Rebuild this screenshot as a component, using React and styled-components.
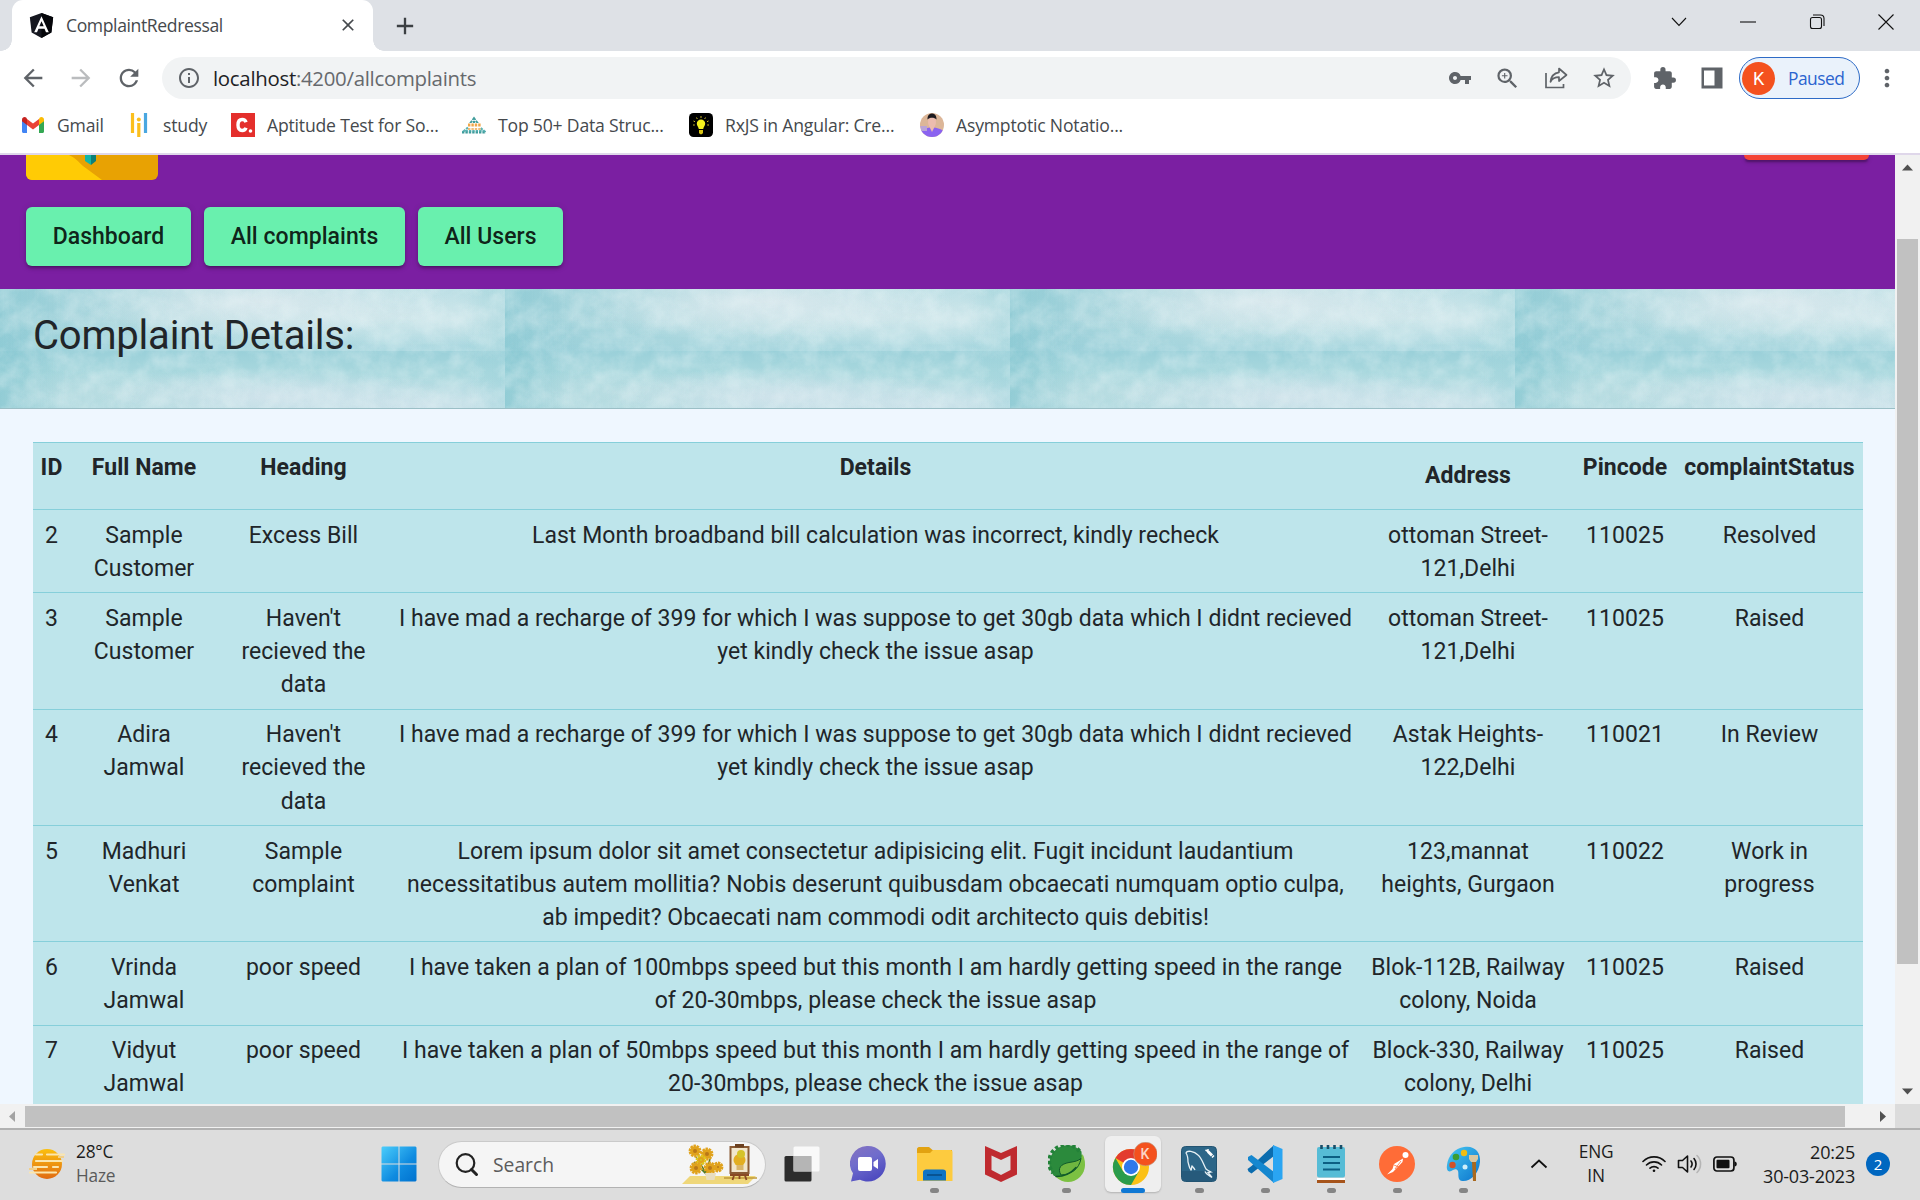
import React from 'react';
import styled, { createGlobalStyle, css } from 'styled-components';
import {
  MdArrowBack, MdArrowForward, MdRefresh, MdInfoOutline, MdVpnKey, MdZoomIn,
  MdStarBorder, MdExtension, MdMoreVert, MdClose, MdAdd,
} from 'react-icons/md';

const GlobalStyle = createGlobalStyle`
  * { box-sizing: border-box; }
  html, body { margin: 0; padding: 0; overflow: hidden; }
  svg { display: block; flex: none; }
`;

const uiFont = '"Open Sans", "Noto Sans", sans-serif';
const pageFont = 'Roboto, "Liberation Sans", sans-serif';

const Screen = styled.div`
  width: 1920px;
  height: 1200px;
  display: flex;
  flex-direction: column;
  overflow: hidden;
  background: #fff;
  font-family: ${uiFont};
`;

/* ---------- browser frame ---------- */
const TabStrip = styled.div`
  height: 51px;
  flex: none;
  display: flex;
  align-items: stretch;
  justify-content: space-between;
  background: #dee1e6;
`;
const Tabs = styled.div`
  display: flex;
  padding-left: 12px;
`;
const Tab = styled.div`
  position: relative;
  width: 361px;
  display: flex;
  align-items: center;
  padding: 0 15px 1px 17px;
  background: #fff;
  border-radius: 11px 11px 0 0;
  color: #45494d;
  font-size: 17.6px;
  letter-spacing: -0.4px;
  &::before, &::after {
    content: '';
    position: absolute;
    bottom: 0;
    width: 11px;
    height: 11px;
  }
  &::before { left: -11px; background: radial-gradient(circle at 0 0, transparent 10.5px, #fff 11px); }
  &::after { right: -11px; background: radial-gradient(circle at 100% 0, transparent 10.5px, #fff 11px); }
`;
const TabTitle = styled.span`
  flex: 1;
  margin-left: 12px;
`;
const NewTab = styled.div`
  display: flex;
  align-items: center;
  margin-left: 18px;
  color: #3c4043;
`;
const WindowControls = styled.div`
  display: flex;
  align-items: center;
  padding: 0 26px 8px 0;
  gap: 53px;
`;

const AddressBar = styled.div`
  height: 54px;
  flex: none;
  display: flex;
  align-items: center;
  padding: 0 18px 0 19px;
`;
const NavIcons = styled.div`
  display: flex;
  gap: 20px;
  width: 143px;
  color: #5f6368;
  svg:nth-child(2) { color: #babcbe; }
`;
const Omnibox = styled.div`
  width: 1469px;
  height: 42px;
  display: flex;
  align-items: center;
  padding: 0 14px 0 15px;
  border-radius: 21px;
  background: #f1f3f4;
  color: #5f6368;
`;
const Url = styled.span`
  flex: 1;
  margin-left: 12px;
  font-size: 20.4px;
  letter-spacing: -0.28px;
  color: #66696d;
  b { font-weight: 400; color: #202124; }
`;
const OmniActions = styled.div`
  display: flex;
  align-items: center;
  gap: 22px;
`;
const Extensions = styled.div`
  display: flex;
  align-items: center;
  gap: 24px;
  margin-left: 21px;
  color: #5f6368;
`;
const ProfileChip = styled.div`
  width: 121px;
  height: 42px;
  margin-left: 16px;
  display: flex;
  align-items: center;
  padding-left: 2px;
  border: 1.5px solid #2e6bc6;
  border-radius: 21px;
  background: #eaf2fb;
  color: #2b64cf;
  font-size: 17.4px;
  letter-spacing: -0.5px;
`;
const Avatar = styled.span`
  width: 33px;
  height: 33px;
  margin-right: 13px;
  border-radius: 50%;
  display: flex;
  align-items: center;
  justify-content: center;
  background: #f4511e;
  color: #fff;
  font: 400 18px ${pageFont};
`;
const MenuDots = styled.div`
  margin-left: 13px;
  color: #5f6368;
`;

const Bookmarks = styled.div`
  height: 50px;
  flex: none;
  display: flex;
  padding: 0 0 8px 21px;
  border-bottom: 2px solid #dfd7ea;
`;
const Bookmark = styled.div`
  width: ${p => p.$width}px;
  display: flex;
  align-items: center;
  gap: 12px;
  color: #45494d;
  font-size: 17.6px;
  letter-spacing: -0.19px;
  white-space: nowrap;
`;

/* ---------- page ---------- */
const Viewport = styled.div`
  height: 949px;
  flex: none;
  display: flex;
`;
const Page = styled.div`
  width: 1895px;
  height: 949px;
  overflow: hidden;
  background: #eff7ff;
  font-family: ${pageFont};
  color: #212529;
`;
const AppHeader = styled.header`
  height: 134px;
  background: #7b1fa2;
  padding-left: 26px;
`;
const HeaderTop = styled.div`
  height: 52px;
  display: flex;
  justify-content: space-between;
  align-items: flex-start;
  padding-right: 26px;
`;
const Logo = styled.svg`
  border-radius: 0 0 6px 6px;
`;
const LogoutEdge = styled.div`
  width: 125px;
  height: 5px;
  border-radius: 0 0 5px 5px;
  background: #f44336;
  box-shadow: 0 3px 2px -1px rgba(0,0,0,.25), 0 2px 5px rgba(0,0,0,.2);
`;
const HeaderNav = styled.nav`
  display: flex;
  gap: 13px;
`;
const NavButton = styled.button`
  width: ${p => p.$width}px;
  height: 59px;
  padding: 0;
  border: 0;
  border-radius: 6px;
  background: #69f0ae;
  color: rgba(0,0,0,.87);
  font: 500 23px ${pageFont};
  letter-spacing: .04px;
  box-shadow: 0 4px 2px -3px rgba(0,0,0,.2), 0 3px 3px rgba(0,0,0,.16), 0 1px 7px rgba(0,0,0,.14);
`;

const Banner = styled.section`
  position: relative;
  height: 120px;
  padding: 23px 0 0 33px;
  border-bottom: 1px solid #9bbfc6;
  background-color: #b4dae0;
  background-image:
    linear-gradient(90deg, rgba(135,200,210,.45), transparent 14%, transparent 92%, rgba(170,215,222,.6)),
    radial-gradient(ellipse at 52% 20%, rgba(220,233,238,.85), transparent 50%),
    radial-gradient(ellipse at 80% 45%, rgba(208,231,235,.9), transparent 60%),
    linear-gradient(180deg, transparent 50%, rgba(145,205,216,.4)),
    linear-gradient(90deg, #9acfd8, #b4dbe1 40%, #bcdfe5 90%, #a9d8de),
    linear-gradient(90deg, rgba(125,195,206,.6), transparent 13%, transparent 93%, rgba(160,212,220,.5)),
    radial-gradient(ellipse at 54% 80%, rgba(210,228,236,.9), transparent 45%),
    radial-gradient(ellipse at 84% 95%, rgba(206,227,235,.9), transparent 38%),
    radial-gradient(ellipse at 25% 75%, rgba(186,221,226,.9), transparent 40%),
    linear-gradient(180deg, #9ad0d9, #a9d8de 40%, #b1dae0);
  background-repeat: repeat-x;
  background-size: 505px 62px, 505px 62px, 505px 62px, 505px 62px, 505px 62px,
    505px 57px, 505px 57px, 505px 57px, 505px 57px, 505px 57px;
  background-position: 0 0, 0 0, 0 0, 0 0, 0 0, 0 62px, 0 62px, 0 62px, 0 62px, 0 62px;
`;
const BannerGrain = styled.svg`
  position: absolute;
  left: 0;
  top: 0;
`;
const BannerTitle = styled.h1`
  position: relative;
  margin: 0;
  font-weight: 400;
  font-size: 40px;
  letter-spacing: -.2px;
  line-height: 48px;
`;

const ComplaintTable = styled.table`
  width: 1830px;
  margin: 33px 0 0 33px;
  table-layout: fixed;
  border-collapse: separate;
  border-spacing: 0;
  background: #bee5eb;
  text-align: center;
  font-size: 23px;
  line-height: 33.2px;
  letter-spacing: .04px;
`;
const cell = css`
  padding: 8.7px 0 7.1px;
  border-top: 1px solid #86cfda;
  vertical-align: top;
  white-space: nowrap;
`;
const HeadCell = styled.th`
  ${cell}
  height: 67px;
  padding-top: ${p => (p.$lowered ? 16 : 8)}px;
  font-weight: 700;
`;
const Cell = styled.td`
  ${cell}
`;

/* ---------- scrollbars ---------- */
const VScroll = styled.div`
  width: 25px;
  display: flex;
  flex-direction: column;
  align-items: center;
  padding: 9px 0 9px;
  background: #f1f1f1;
`;
const VThumb = styled.div`
  width: 21px;
  height: 725px;
  margin: 68px 0 auto;
  background: #c1c1c1;
`;
const HScroll = styled.div`
  height: 24px;
  flex: none;
  display: flex;
  align-items: center;
  background: #f1f1f1;
`;
const HThumb = styled.div`
  width: 1820px;
  height: 21px;
  margin: 0 35px 0 10px;
  background: #c1c1c1;
`;
const Corner = styled.div`
  width: 25px;
  height: 24px;
  margin-left: auto;
  background: #dcdcdc;
`;

/* ---------- taskbar ---------- */
const Taskbar = styled.div`
  height: 72px;
  flex: none;
  display: flex;
  align-items: center;
  border-top: 2px solid #b1b1b1;
  padding: 0 30px 2px 0;
  background: #dddddd;
`;
const Weather = styled.div`
  width: 381px;
  display: flex;
  align-items: center;
  gap: 11px;
  padding-left: 28px;
`;
const Stack = styled.div`
  width: ${p => p.$width || 'auto'};
  font-size: ${p => p.$size || 17.3}px;
  line-height: 24px;
  text-align: ${p => p.$align || 'left'};
  color: #1b1b1b;
  letter-spacing: -0.2px;
  span { display: block; }
`;
const Muted = styled.span`
  color: #5a5a5a;
`;
const SearchBox = styled.div`
  width: 328px;
  height: 47px;
  margin: 0 3px 0 21px;
  display: flex;
  align-items: center;
  padding: 0 7px 0 15px;
  border: 1.5px solid #cacaca;
  border-bottom-color: #b2b2b2;
  border-radius: 24px;
  background: #f5f5f5;
  color: #5c5c5c;
  font-size: 19.3px;
  overflow: hidden;
`;
const SearchLabel = styled.span`
  flex: 1;
  margin-left: 14px;
`;
const AppButton = styled.div`
  position: relative;
  width: 56px;
  height: 56px;
  margin: 0 5.08px;
  border-radius: 6px;
  display: flex;
  align-items: center;
  justify-content: center;
  ${p => p.$active && css`
    background: #efefef;
    box-shadow: 0 1px 2px rgba(0,0,0,.2);
  `}
  &::after {
    content: '';
    position: absolute;
    bottom: -1px;
    width: ${p => (p.$active ? 24 : 9)}px;
    height: 5px;
    border-radius: 3px;
    background: ${p => (p.$active ? '#0f78d4' : p.$running ? '#858585' : 'transparent')};
  }
`;
const Tray = styled.div`
  display: flex;
  align-items: center;
  margin-left: auto;
`;
const TrayIcons = styled.div`
  display: flex;
  align-items: center;
  gap: 11px;
  margin: 0 26px 0 -2px;
`;
const Notice = styled.div`
  width: 24px;
  height: 24px;
  margin-left: 11px;
  border-radius: 50%;
  display: flex;
  align-items: center;
  justify-content: center;
  background: #0067c0;
  color: #fff;
  font-size: 15px;
`;

/* ---------- icons ---------- */
const AngularIcon = () => (
  <svg width="25" height="25" viewBox="0 0 24 24">
    <path d="M12 0 .8 4l1.7 14.8L12 24l9.5-5.2L23.2 4z" fill="#15171f" />
    <path d="M12 0v24l9.5-5.2L23.2 4z" fill="#05060a" />
    <path d="M12 3 5 18.5h2.7l1.4-3.5h5.8l1.4 3.5H19zm0 5 2.100 4.800H9.900z" fill="#fff" fillRule="evenodd" />
  </svg>
);
const GmailIcon = () => (
  <svg width="24" height="24" viewBox="0 0 24 24">
    <path d="M1 7v11.500c0 .8.600 1.500 1.500 1.500H6V10z" fill="#4285f4" />
    <path d="M23 7v11.500c0 .8-.6 1.500-1.500 1.500H18V10z" fill="#34a853" />
    <path d="M18 6v6l5-3.700V6.500c0-2.200-2.500-3.300-4.200-2z" fill="#fbbc04" />
    <path d="M6 12V6l6 4.500L18 6v6l-6 4.500z" fill="#ea4335" />
    <path d="M1 6.500v1.800L6 12V6L5.200 4.500C3.500 3.200 1 4.300 1 6.500z" fill="#c5221f" />
  </svg>
);
const StudyIcon = () => (
  <svg width="24" height="26" viewBox="0 0 24 26" fill="none" strokeWidth="3.200">
    <path d="M5.500 1v20M11.800 11v14" stroke="#fbbf1d" />
    <path d="M18.500 1v20" stroke="#4aa7e0" />
    <circle cx="11.800" cy="7.500" r="2" fill="#fbbf1d" />
  </svg>
);
const CIcon = () => (
  <svg width="24" height="24" viewBox="0 0 24 24">
    <path d="M0 0h24v24H0z" fill="#e42f2c" />
    <path d="M15 9.200C14.500 7.500 13 6.500 11.200 6.500 8.500 6.500 7 8.800 7 12s1.500 5.500 4.200 5.500c1.800 0 3.300-1 3.800-2.700" fill="none" stroke="#fff" strokeWidth="3.400" />
    <circle cx="19.500" cy="18" r="1.800" fill="#fff" />
  </svg>
);
const PyramidIcon = () => (
  <svg width="24" height="24" viewBox="0 0 24 24" fill="none" strokeWidth="2.200" strokeDasharray="2.400 1">
    <path d="M12 5 9 9h6z" stroke="#3f9c9b" strokeWidth="1.800" />
    <path d="M6 12h13" stroke="#f0a648" strokeWidth="3" />
    <path d="M6 14.500 2 18h20l-4-3.500" stroke="#5bb3b4" />
    <path d="M0 19.500h24" stroke="#3f9c9b" />
    <path d="M6 16h13" stroke="#f0a648" strokeWidth="1.500" />
  </svg>
);
const BulbIcon = () => (
  <svg width="24" height="24" viewBox="0 0 24 24">
    <rect width="24" height="24" rx="4.500" fill="#000" />
    <path d="M12 6.500a4.200 4.200 0 0 0-4.200 4.200c0 2 1.600 3 2 5.300h4.400c.4-2.300 2-3.300 2-5.300A4.200 4.200 0 0 0 12 6.500z" fill="#f4f01f" />
    <path d="M10 17h4v3l-1.200 1.300h-1.600L10 20z" fill="#d8c514" />
    <path d="M12 3v2M7.500 4.500l.8 1.500M16.500 4.500l-.8 1.500M4.500 8l1.500.7M19.500 8l-1.500.7M4 12h1.800M20 12h-1.800" stroke="#c9b92a" />
  </svg>
);
const PersonIcon = () => (
  <svg width="24" height="24" viewBox="0 0 24 24">
    <defs><clipPath id="face"><circle cx="12" cy="12" r="12" /></clipPath></defs>
    <g clipPath="url(#face)">
      <path d="M0 0h24v24H0z" fill="#dcb698" />
      <path d="M0 19c4-6 20-6 24 0v5H0z" fill="#8a63f0" />
      <path d="M0 13h7v5H1z" fill="#b9a3d8" />
      <ellipse cx="12" cy="9" rx="4" ry="6" fill="#ecbcae" />
      <path d="M7.500 6.500c-.5-8 9.500-8 9 0-2-2.500-7-2.500-9 0z" fill="#1d1a1f" />
      <path d="m9.500 14 2.500 5 2.500-5z" fill="#ecbcae" />
    </g>
  </svg>
);
const ShareIcon = () => (
  <svg width="26" height="26" viewBox="0 0 26 26" fill="none" stroke="#5f6368" strokeWidth="1.700">
    <path d="M3 8v14.500h17.500V19" />
    <path d="M16 3.500 23.500 10 16 16v-3.800c-4.500 0-7 1.600-8.500 4.600.5-5 3.500-8.800 8.500-9.500z" strokeLinejoin="round" />
  </svg>
);
const SidePanelIcon = () => (
  <svg width="22" height="22" viewBox="0 0 22 22">
    <path d="M.5.500h21v21H.5z" fill="#5f6368" />
    <path d="M3 3.500h10.500v15H3z" fill="#fff" />
  </svg>
);
const ControlIcon = ({ d }) => (
  <svg width="16" height="16" viewBox="0 0 16 16" fill="none" stroke="#111" strokeWidth="1.100"><path d={d} /></svg>
);
const Arrow = ({ d, fill = '#505050' }) => (
  <svg width="11" height="7" viewBox="0 0 11 7"><path d={d} fill={fill} /></svg>
);
const SideArrow = styled.svg`
  margin-left: ${p => p.$left || 0}px;
`;
const HazeIcon = () => (
  <svg width="37" height="34" viewBox="0 0 37 34">
    <defs><linearGradient id="sun" x1="0" y1="0" x2="0" y2="1"><stop stopColor="#fbc00f" /><stop offset="1" stopColor="#e06a12" /></linearGradient></defs>
    <circle cx="19" cy="17" r="15" fill="url(#sun)" />
    <g stroke="#fbe6ae" strokeWidth="2.200" strokeLinecap="round">
      <path d="M8 7.500h6M19 7.500h17M8 14h26M6 20h13M25 20h5M2 25.500h26" />
    </g>
    <path d="M1 22h8M30 10h6" stroke="#f1cf8b" strokeWidth="2" />
  </svg>
);
const WindowsIcon = () => (
  <svg width="36" height="36" viewBox="0 0 36 36">
    <defs><linearGradient id="win" x1="0" y1="0" x2="1" y2="1"><stop stopColor="#4bcdfb" /><stop offset=".6" stopColor="#0f8be0" /><stop offset="1" stopColor="#0072cf" /></linearGradient></defs>
    <path d="M1.500.500h16v17h-17v-16zM18.500.500h16l1 1v16h-17zM.5 18.500h17v17h-16l-1-1zM18.500 18.500h17v16l-1 1h-16z" fill="url(#win)" />
  </svg>
);
const LensIcon = () => (
  <svg width="25" height="25" viewBox="0 0 25 25" fill="none" stroke="#222">
    <circle cx="11.500" cy="11" r="8.800" strokeWidth="2.200" />
    <path d="m17.500 17.500 5 5" strokeWidth="3" strokeLinecap="round" />
  </svg>
);
const sunflowers = [[8, 8, 6], [20, 11, 6], [14, 17, 5], [9, 25, 6], [23, 25, 6], [31, 24, 5]];
const SunflowerArt = () => (
  <svg width="76" height="44" viewBox="0 0 76 44">
    <path d="M8 34h66l-8 8H0z" fill="#efd77a" />
    <path d="M42 36h33" stroke="#c09a3a" strokeWidth="1.500" />
    <path d="m14 15 10 16 4-14M12 20l12 12 8-8" stroke="#4d7a2b" fill="none" strokeWidth="1.500" />
    {sunflowers.map(([x, y, r], i) => (
      <g key={i} transform={`translate(${x + 5} ${y + 1})`}>
        <circle r={r - 1.200} fill="#e0a21c" />
        <circle r={r - .8} fill="none" stroke={i === 2 ? '#dfc61f' : '#e0a21c'} strokeWidth="2.400" strokeDasharray="2.400 .8" />
        <circle r={r - 4} fill={i === 2 ? '#cdc82a' : '#b97818'} />
      </g>
    ))}
    <path d="M23 31h11l-1.500 7h-8z" fill="#e8ddc0" />
    <path d="M47.500 4h20v28h-20z" fill="#8a5a34" />
    <path d="M49.500 6h16v24h-16z" fill="#f1e6cc" />
    <path d="M53 2h9v3.500h-9z" fill="#6b4020" />
    <circle cx="57.500" cy="18" r="6" fill="#e2ae22" />
    <circle cx="59" cy="12" r="4" fill="#d5c32a" />
    <path d="M54.500 23h7v5h-7z" fill="#d9b56a" />
    <path d="M48 33h19M52.500 32l-2 6M62.500 32l2 6M57.500 32v5" stroke="#8a4a24" strokeWidth="1.800" />
  </svg>
);
const TaskViewIcon = () => (
  <svg width="36" height="36" viewBox="0 0 36 36">
    <rect x=".5" y="10" width="27" height="25.500" rx="1.500" fill="#2c2c2c" />
    <rect x="9.500" y=".5" width="26" height="25" rx="1.500" fill="#fff" fillOpacity=".82" />
    <path d="M9.500 10h18v15.500h-18z" fill="#b5b5b5" />
  </svg>
);
const ChatIcon = () => (
  <svg width="36" height="36" viewBox="0 0 36 36">
    <defs><linearGradient id="chat" x1="0" y1="0" x2=".5" y2="1"><stop stopColor="#8573c0" /><stop offset=".5" stopColor="#6f6ccc" /><stop offset="1" stopColor="#4f4cc0" /></linearGradient></defs>
    <path d="M18 0a17.500 17.500 0 0 1 0 35.500c-3 0-5.500-.8-8-1.800L1 35.500l2-8.300A17.500 17.500 0 0 1 18 0z" fill="url(#chat)" />
    <rect x="8" y="11" width="14" height="14" rx="2" fill="#fff" />
    <path d="m23.500 16 4.500-3v10l-4.500-3z" fill="#fff" />
  </svg>
);
const ExplorerIcon = () => (
  <svg width="37" height="36" viewBox="0 0 37 36">
    <path d="M1 3c0-1 1-2 2-2h10l3.500 3H36v10H1z" fill="#e2a211" />
    <path d="M1 7h13l3-3h18l1.500 1.500V35H1z" fill="#fdcb3f" />
    <path d="M7 34.500V26c0-1.500 1.500-2.500 3-2.500h17c2 0 3 1 3 2.500v8.500z" fill="#0f73c4" />
    <path d="M11 29h15" stroke="#074b86" strokeWidth="1.600" />
  </svg>
);
const ShieldIcon = () => (
  <svg width="32" height="38" viewBox="0 0 32 38">
    <path d="m0 1 16 7L32 1v28.500L16 37 0 29.500zM6.500 10.500v14.500l9.500 5 9.500-5V10.500L16 15z" fill="#bf2a2f" fillRule="evenodd" />
  </svg>
);
const SpringIcon = () => (
  <svg width="38" height="38" viewBox="0 0 38 38">
    <circle cx="20" cy="20" r="17" fill="#7cc142" />
    <path d="M33.500 6.500A18 18 0 0 0 6 31c12 1 21-5 28-13z" fill="#2b8a3c" />
    <path d="M31.500 6.200A17 17 0 0 0 5 28" fill="none" stroke="#238239" strokeWidth="4" strokeDasharray="3.400 2.400" />
    <path d="M34.500 9c3.500 6 2.500 14-1 19C29 34 20 34 10 32c12-2 22-9 24.500-23z" fill="#7cc142" />
    <path d="M13 30c-4-7 0-11 8-12.500 6-1 9-1.500 12-4-2 11-10 16-20 16.500z" fill="#6fb640" stroke="#0f5a2a" strokeWidth="1" />
    <path d="M8 31.500c7 0 14-2 20-9" fill="none" stroke="#0f5a2a" strokeWidth="1.600" strokeLinecap="round" />
  </svg>
);
const ChromeIcon = () => (
  <svg width="48" height="44" viewBox="0 0 48 44">
    <circle cx="22" cy="25" r="18" fill="#fbc116" />
    <path d="M22 25 6.400 16A18 18 0 0 1 37.600 16z" fill="#e33b2e" />
    <path d="M6.400 16A18 18 0 0 0 22 43l7.800-13.500L14.200 29.500z" fill="#2a9c4b" />
    <circle cx="22" cy="25" r="9" fill="#fff" />
    <circle cx="22" cy="25" r="7.200" fill="#2f78ea" />
    <circle cx="36.500" cy="12" r="11.800" fill="#f4511e" stroke="#b9a08f" strokeWidth=".6" />
    <text x="36" y="17" textAnchor="middle" fontSize="14" fontWeight="500" fontFamily='Roboto, sans-serif' fill="#fbd5c7">K</text>
  </svg>
);
const DolphinIcon = () => (
  <svg width="36" height="38" viewBox="0 0 36 38">
    <rect x=".5" y="1.500" width="35" height="35" rx="4" fill="#2c6688" stroke="#235472" />
    <path d="M1 26h34v6a4 4 0 0 1-4 4H5a4 4 0 0 1-4-4z" fill="#265a7b" />
    <path d="M14 25c-1-2-2-3-3-4-1 2 0 3-1 4-2-2-2-5-3-8C7 13 7 11 5 8c1-3 8-2 12 2 4 3 5 9 8 14 1 1 3 2 5 3l-3 .5 4 5c-3-2-6-3-7-6" fill="none" stroke="#e6f0f4" strokeWidth="1.300" />
    <path d="m27 6.500 4 4" stroke="#fff" strokeWidth="3" />
    <path d="m24.500 5 2.500 1.500M27 4l0 3M31 12.500l2-2" stroke="#fff" strokeWidth="1.500" fill="none" />
  </svg>
);
const CodeIcon = () => (
  <svg width="36" height="38" viewBox="0 0 36 38">
    <path d="M27 0 4.500 21 .5 24l1 2.500 3 2L27 11z" fill="#0b6cae" />
    <path d="M4.500 10 1 12v3l26 23V27z" fill="#1587cf" />
    <path d="M26 0 35.500 4v30L26 38z" fill="#2aa5f2" />
  </svg>
);
const NotepadIcon = () => (
  <svg width="30" height="38" viewBox="0 0 30 38">
    <path d="M1 33h28v3.500H1z" fill="#fff" />
    <path d="M1 35h28v3H1z" fill="#a6541b" />
    <rect x="1" y="2" width="28" height="30.500" rx="2" fill="#56bcd6" />
    <path d="M7 12h17M7 18h17M7 24.500h17" stroke="#0c5f83" strokeWidth="2" />
    <path d="M5.500 0v4M12 0v4M18.500 0v4M25 0v4" stroke="#174e69" strokeWidth="2.600" />
  </svg>
);
const PostIcon = () => (
  <svg width="36" height="38" viewBox="0 0 36 38">
    <circle cx="18" cy="19" r="18" fill="#ff6c37" />
    <circle cx="26.500" cy="10" r="3" fill="#fff" />
    <path d="M24 13.500 15 19l-1.500 5L8 29.500l6-2.500L23.500 17z" fill="#fff" />
    <path d="m15 20 6 2.500M16 24l6-8" stroke="#ff6c37" strokeWidth=".8" />
  </svg>
);
const PaintIcon = () => (
  <svg width="36" height="38" viewBox="0 0 36 38">
    <defs><linearGradient id="pal" x1="0" y1="0" x2="1" y2="1"><stop stopColor="#47c9f3" /><stop offset="1" stopColor="#0b74cd" /></linearGradient></defs>
    <path d="M18 2c10-2 17 5 16 15-1 12-10 20-18 19-5-1-3-7-4-10-1-2-3-2-5-1-4 3-7 1-6-5C2 11 9 3 18 2z" fill="url(#pal)" />
    <circle cx="18" cy="8" r="3.200" fill="#f0bd15" />
    <circle cx="10" cy="12" r="3.300" fill="#3b9d32" />
    <circle cx="6.500" cy="20" r="3.200" fill="#d0522b" />
    <circle cx="19" cy="22" r="2.500" fill="#cdeefa" />
    <path d="M26 17h4v19h-3z" fill="#a9691f" />
    <path d="M23 10h9v4l-2 3h-5l-2-3z" fill="#d9c7a2" />
  </svg>
);
const WifiIcon = () => (
  <svg width="24" height="18" viewBox="0 0 24 18" fill="none" stroke="#111" strokeWidth="1.600" strokeLinecap="round">
    <path d="M1 6.500a15.500 15.500 0 0 1 22 0M4.500 10a10.600 10.600 0 0 1 15 0M8 13.200a5.800 5.800 0 0 1 8 0" />
    <circle cx="12" cy="15.700" r="1.300" fill="#111" stroke="none" />
  </svg>
);
const SpeakerIcon = () => (
  <svg width="25" height="20" viewBox="0 0 25 20" fill="none" stroke="#111" strokeWidth="1.600" strokeLinecap="round" strokeLinejoin="round">
    <path d="M1.500 6.500h4L10.500 2v16l-5-4.500h-4zM14 7a5 5 0 0 1 0 6M17 4.500a8.500 8.500 0 0 1 0 11" />
    <path d="M20 1.500a12 12 0 0 1 0 17" stroke="#b5b5b5" />
  </svg>
);
const BatteryIcon = () => (
  <svg width="24" height="16" viewBox="0 0 24 16">
    <rect x=".9" y="1" width="20" height="14" rx="3" fill="none" stroke="#111" strokeWidth="1.700" />
    <rect x="3.500" y="3.800" width="13" height="8.400" rx="1" fill="#111" />
    <path d="M21.500 5.500c3 0 3 5 0 5z" fill="#111" />
  </svg>
);

const bookmarks = [
  { label: 'Gmail', icon: <GmailIcon />, width: 106 },
  { label: 'study', icon: <StudyIcon />, width: 104 },
  { label: 'Aptitude Test for So...', icon: <CIcon />, width: 231 },
  { label: 'Top 50+ Data Struc...', icon: <PyramidIcon />, width: 227 },
  { label: 'RxJS in Angular: Cre...', icon: <BulbIcon />, width: 231 },
  { label: 'Asymptotic Notatio...', icon: <PersonIcon />, width: 240 },
];

const columns = [
  ['ID', 37], ['Full Name', 148], ['Heading', 171], ['Details', 973],
  ['Address', 212], ['Pincode', 102], ['complaintStatus', 187],
];

const recharge = ['I have mad a recharge of 399 for which I was suppose to get 30gb data which I didnt recieved', 'yet kindly check the issue asap'];
const complaints = [
  [['2'], ['Sample', 'Customer'], ['Excess Bill'], ['Last Month broadband bill calculation was incorrect, kindly recheck'], ['ottoman Street-', '121,Delhi'], ['110025'], ['Resolved']],
  [['3'], ['Sample', 'Customer'], ["Haven't", 'recieved the', 'data'], recharge, ['ottoman Street-', '121,Delhi'], ['110025'], ['Raised']],
  [['4'], ['Adira', 'Jamwal'], ["Haven't", 'recieved the', 'data'], recharge, ['Astak Heights-', '122,Delhi'], ['110021'], ['In Review']],
  [['5'], ['Madhuri', 'Venkat'], ['Sample', 'complaint'], ['Lorem ipsum dolor sit amet consectetur adipisicing elit. Fugit incidunt laudantium', 'necessitatibus autem mollitia? Nobis deserunt quibusdam obcaecati numquam optio culpa,', 'ab impedit? Obcaecati nam commodi odit architecto quis debitis!'], ['123,mannat', 'heights, Gurgaon'], ['110022'], ['Work in', 'progress']],
  [['6'], ['Vrinda', 'Jamwal'], ['poor speed'], ['I have taken a plan of 100mbps speed but this month I am hardly getting speed in the range', 'of 20-30mbps, please check the issue asap'], ['Blok-112B, Railway', 'colony, Noida'], ['110025'], ['Raised']],
  [['7'], ['Vidyut', 'Jamwal'], ['poor speed'], ['I have taken a plan of 50mbps speed but this month I am hardly getting speed in the range of', '20-30mbps, please check the issue asap'], ['Block-330, Railway', 'colony, Delhi'], ['110025'], ['Raised']],
];

const apps = [
  { icon: <TaskViewIcon /> },
  { icon: <ChatIcon /> },
  { icon: <ExplorerIcon />, running: true },
  { icon: <ShieldIcon /> },
  { icon: <SpringIcon />, running: true },
  { icon: <ChromeIcon />, active: true },
  { icon: <DolphinIcon />, running: true },
  { icon: <CodeIcon />, running: true },
  { icon: <NotepadIcon />, running: true },
  { icon: <PostIcon />, running: true },
  { icon: <PaintIcon />, running: true },
];

function BrowserFrame() {
  return (
    <>
      <TabStrip>
        <Tabs>
          <Tab><AngularIcon /><TabTitle>ComplaintRedressal</TabTitle><MdClose size={20} /></Tab>
          <NewTab><MdAdd size={28} /></NewTab>
        </Tabs>
        <WindowControls>
          <ControlIcon d="m1 4 7 7.500L15 4" />
          <ControlIcon d="M0 8h16" />
          <ControlIcon d="M3.500 3.500h7q2 0 2 2v7q0 2-2 2h-7q-2 0-2-2v-7q0-2 2-2zM4 1h7.500q3.500 0 3.500 3.500V12" />
          <ControlIcon d="m.5.500 15 15m0-15-15 15" />
        </WindowControls>
      </TabStrip>
      <AddressBar>
        <NavIcons><MdArrowBack size={28} /><MdArrowForward size={28} /><MdRefresh size={28} /></NavIcons>
        <Omnibox>
          <MdInfoOutline size={24} />
          <Url><b>localhost</b>:4200/allcomplaints</Url>
          <OmniActions>
            <MdVpnKey size={24} /><MdZoomIn size={27} /><ShareIcon /><MdStarBorder size={26} />
          </OmniActions>
        </Omnibox>
        <Extensions><MdExtension size={25} /><SidePanelIcon /></Extensions>
        <ProfileChip><Avatar>K</Avatar>Paused</ProfileChip>
        <MenuDots><MdMoreVert size={28} /></MenuDots>
      </AddressBar>
      <Bookmarks>
        {bookmarks.map(b => <Bookmark key={b.label} $width={b.width}>{b.icon}{b.label}</Bookmark>)}
      </Bookmarks>
    </>
  );
}

function ComplaintPage() {
  return (
    <Page>
      <AppHeader>
        <HeaderTop>
          <Logo width="132" height="25" viewBox="0 0 132 25">
            <path d="M0 0h132v25H0z" fill="#e8a203" />
            <path d="M0 0h43c5 2 10 7 14 11l19 14H0z" fill="#ffcb05" />
            <path d="M59 0h6v10l-6-4z" fill="#12b5a6" />
            <path d="M65 0h5v6l-5 4z" fill="#0d7f78" />
          </Logo>
          <LogoutEdge />
        </HeaderTop>
        <HeaderNav>
          <NavButton $width={165}>Dashboard</NavButton>
          <NavButton $width={201}>All complaints</NavButton>
          <NavButton $width={145}>All Users</NavButton>
        </HeaderNav>
      </AppHeader>
      <Banner>
        <BannerGrain width="1895" height="119">
          <defs>
            <filter id="blot" x="0" y="0" width="100%" height="100%">
              <feTurbulence type="fractalNoise" baseFrequency="0.05 0.05" numOctaves="5" seed="11" />
              <feColorMatrix values="0 0 0 0 .88  0 0 0 0 .95  0 0 0 0 .96  1.8 0 0 0 -.6" />
            </filter>
            <pattern id="tile" width="505" height="119" patternUnits="userSpaceOnUse">
              <rect width="505" height="119" filter="url(#blot)" opacity=".34" />
            </pattern>
          </defs>
          <rect width="1895" height="119" fill="url(#tile)" />
        </BannerGrain>
        <BannerTitle>Complaint Details:</BannerTitle>
      </Banner>
      <ComplaintTable>
        <colgroup>{columns.map(([name, w]) => <col key={name} width={w} />)}</colgroup>
        <thead>
          <tr>{columns.map(([name]) => <HeadCell key={name} $lowered={name === 'Address'}>{name}</HeadCell>)}</tr>
        </thead>
        <tbody>
          {complaints.map(row => (
            <tr key={row[0][0]}>
              {row.map((lines, i) => (
                <Cell key={i}>{lines.map((line, j) => <React.Fragment key={j}>{j > 0 && <br />}{line}</React.Fragment>)}</Cell>
              ))}
            </tr>
          ))}
        </tbody>
      </ComplaintTable>
    </Page>
  );
}

export default function App() {
  return (
    <Screen>
      <GlobalStyle />
      <BrowserFrame />
      <Viewport>
        <ComplaintPage />
        <VScroll>
          <Arrow d="M0 6.500 5.500.500 11 6.500z" />
          <VThumb />
          <Arrow d="M0 .5 5.500 6.500 11 .5z" />
        </VScroll>
      </Viewport>
      <HScroll>
        <SideArrow $left={9} width="6" height="11" viewBox="0 0 6 11"><path d="M6 0 0 5.500 6 11z" fill="#a3a3a3" /></SideArrow>
        <HThumb />
        <SideArrow width="6" height="11" viewBox="0 0 6 11"><path d="M0 0 6 5.500 0 11z" fill="#505050" /></SideArrow>
        <Corner />
      </HScroll>
      <Taskbar>
        <Weather>
          <HazeIcon />
          <Stack><span>28°C</span><Muted>Haze</Muted></Stack>
        </Weather>
        <WindowsIcon />
        <SearchBox><LensIcon /><SearchLabel>Search</SearchLabel><SunflowerArt /></SearchBox>
        {apps.map((a, i) => <AppButton key={i} $active={a.active} $running={a.running}>{a.icon}</AppButton>)}
        <Tray>
          <svg width="18" height="10" viewBox="0 0 18 10" fill="none" stroke="#111" strokeWidth="1.800"><path d="m1.500 8.500 7.500-7 7.500 7" /></svg>
          <Stack $width="96px" $align="center"><span>ENG</span><span>IN</span></Stack>
          <TrayIcons><WifiIcon /><SpeakerIcon /><BatteryIcon /></TrayIcons>
          <Stack $align="right" $size={18}><span>20:25</span><span>30-03-2023</span></Stack>
          <Notice>2</Notice>
        </Tray>
      </Taskbar>
    </Screen>
  );
}
